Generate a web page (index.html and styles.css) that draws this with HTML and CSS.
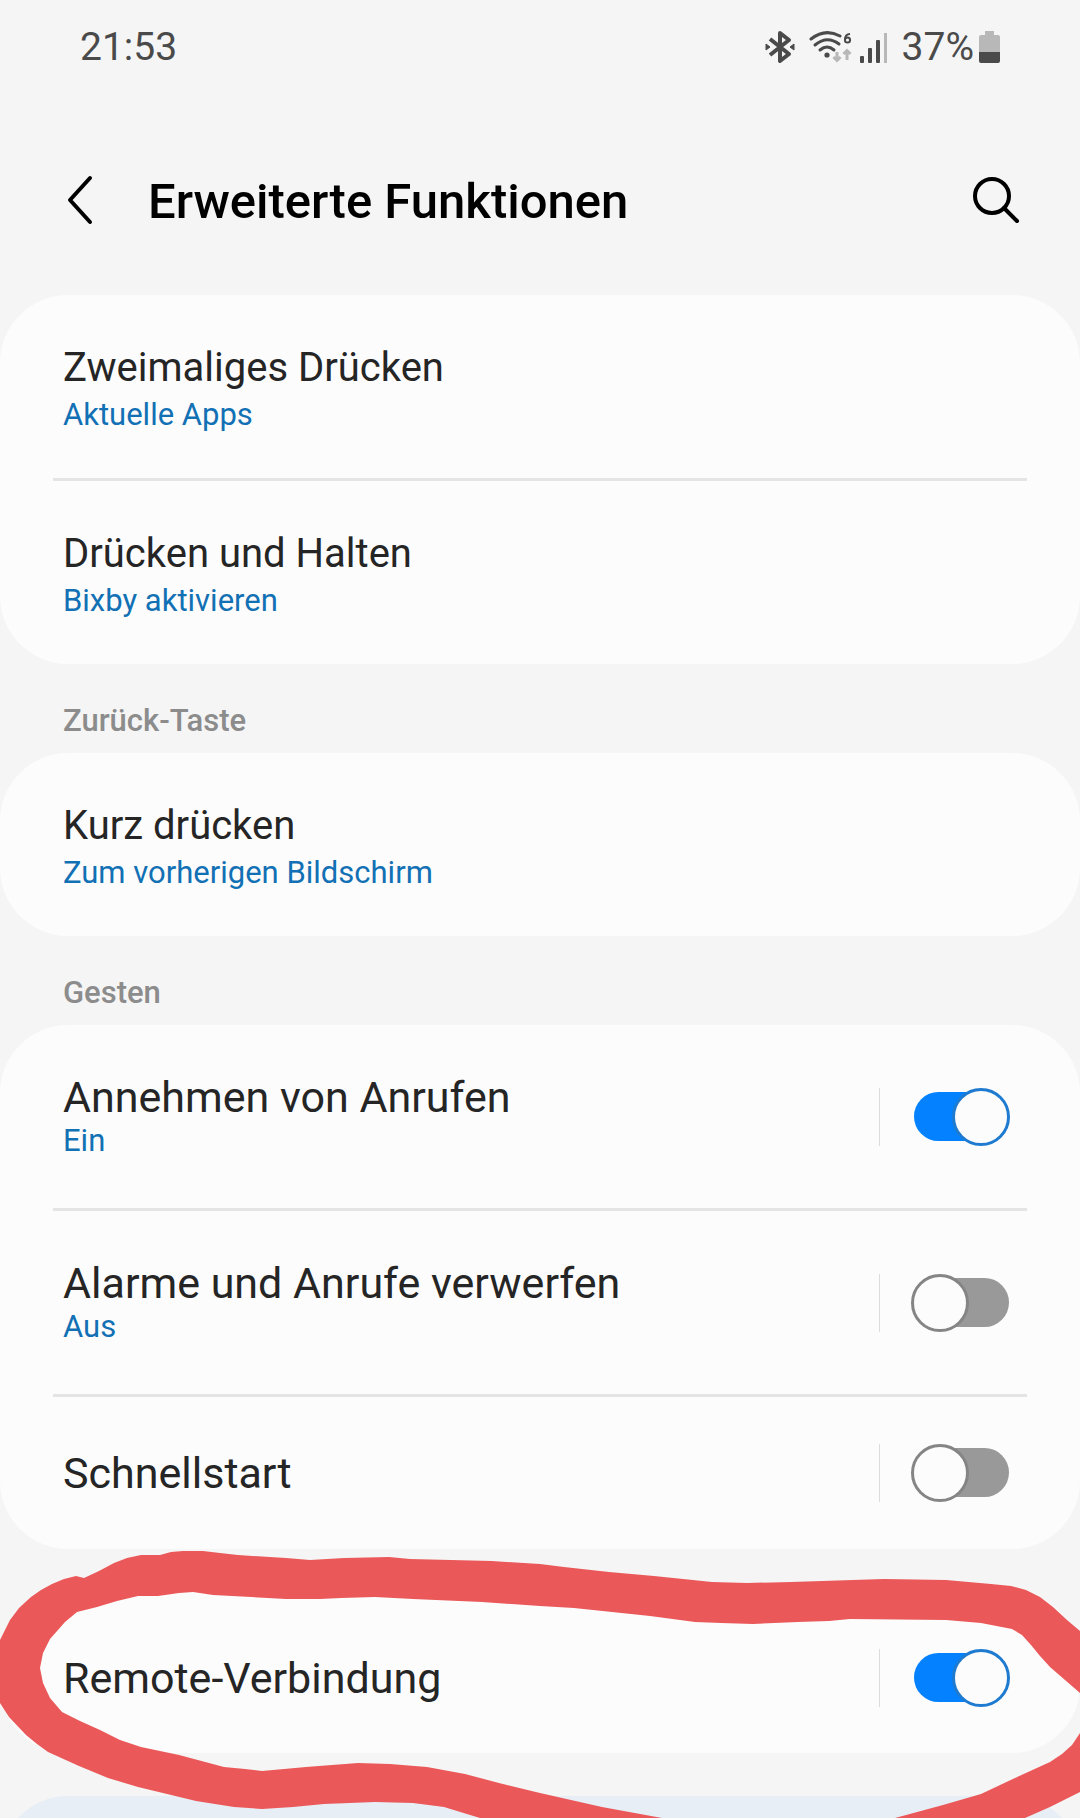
FILE: index.html
```html
<!doctype html>
<html lang="de">
<head>
    <meta charset="UTF-8">
    <meta name="viewport" content="width=device-width, initial-scale=1.0">
    <title>Erweiterte Funktionen</title>
    <link rel="stylesheet" href="styles.css">
</head>
<body>
<div class="page">
    <div class="status">
        <span class="time">21:53</span>
        <div class="status-icons">
            <svg class="ic-bt" viewBox="0 0 30 34" width="30" height="34">
                <path d="M5 9 L24 24 L15 31 V3 L24 10 L5 25" fill="none" stroke="#4a4a4a" stroke-width="4" stroke-linejoin="round"/>
                <path d="M1 14 L5 17 L1 20 Z M29 14 L25 17 L29 20 Z" fill="#4a4a4a" stroke="#4a4a4a"/>
            </svg>
            <svg class="ic-wifi" viewBox="0 0 43 34" width="43" height="34">
                <g fill="none" stroke="#4a4a4a" stroke-width="3" stroke-linecap="round">
                    <path d="M2 9 Q16 -2 31 6"/>
                    <path d="M6 15 Q18 5 30 14"/>
                    <path d="M11 20 Q18 14 25 20"/>
                </g>
                <circle cx="18" cy="25" r="2.6" fill="#4a4a4a"/>
                <path d="M41 4 Q36 4 36 10" fill="none" stroke="#4a4a4a" stroke-width="2"/>
                <circle cx="38.5" cy="10" r="2.6" fill="none" stroke="#4a4a4a" stroke-width="2"/>
                <path d="M28 22 V31 M24.5 27 L28 30.500 L31.5 27 M38 30 V21 M34.5 24 L38 20.5 L41.5 24" fill="none" stroke="#b8b8b8" stroke-width="3"/>
            </svg>
            <svg class="ic-signal" viewBox="0 0 28 34" width="28" height="34">
                <g fill="#4a4a4a">
                    <rect x="0" y="26" width="4" height="7" rx="1"/>
                    <rect x="8" y="18" width="4" height="15" rx="1"/>
                    <rect x="16" y="10" width="4" height="23" rx="1"/>
                </g>
                <rect x="24" y="3" width="3" height="30" fill="#b8b8b8"/>
            </svg>
            <span class="percent">37%</span>
            <svg class="ic-battery" viewBox="0 0 22 34" width="22" height="34">
                <path d="M6 1 H15 V5 H19 Q21 5 21 7 V23 H0 V7 Q0 5 2 5 H6 Z" fill="#b8b8b8"/>
                <path d="M0 22 H21 V31 Q21 33 19 33 H2 Q0 33 0 31 Z" fill="#4a4a4a"/>
            </svg>
        </div>
    </div>

    <header class="header">
        <button class="icon-btn" type="button" aria-label="Zurück">
            <svg viewBox="0 0 28 50" width="28" height="50">
                <path d="M24 3 L4 25 L24 47" fill="none" stroke="#000" stroke-width="4" stroke-linecap="round" stroke-linejoin="round"/>
            </svg>
        </button>
        <h1>Erweiterte Funktionen</h1>
        <button class="icon-btn" type="button" aria-label="Suchen">
            <svg viewBox="0 0 48 48" width="48" height="48">
                <circle cx="20" cy="20" r="17" fill="none" stroke="#000" stroke-width="4"/>
                <path d="M32 32 L45 45" stroke="#000" stroke-width="4" stroke-linecap="round"/>
            </svg>
        </button>
    </header>

    <main class="content">
        <section class="card">
            <a class="row" href="#">
                <span class="title">Zweimaliges Drücken</span>
                <span class="summary">Aktuelle Apps</span>
            </a>
            <a class="row" href="#">
                <span class="title">Drücken und Halten</span>
                <span class="summary">Bixby aktivieren</span>
            </a>
        </section>

        <h2>Zurück-Taste</h2>
        <section class="card">
            <a class="row" href="#">
                <span class="title">Kurz drücken</span>
                <span class="summary">Zum vorherigen Bildschirm</span>
            </a>
        </section>

        <h2>Gesten</h2>
        <section class="card">
            <div class="row row-switch">
                <label for="calls">
                    <span class="title">Annehmen von Anrufen</span>
                    <span class="summary">Ein</span>
                </label>
                <div class="switch-box"><input class="switch" id="calls" type="checkbox" role="switch" checked></div>
            </div>
            <div class="row row-switch">
                <label for="mute">
                    <span class="title">Alarme und Anrufe verwerfen</span>
                    <span class="summary">Aus</span>
                </label>
                <div class="switch-box"><input class="switch" id="mute" type="checkbox" role="switch"></div>
            </div>
            <div class="row row-switch row-single">
                <label for="quick"><span class="title">Schnellstart</span></label>
                <div class="switch-box"><input class="switch" id="quick" type="checkbox" role="switch"></div>
            </div>
        </section>

        <div class="marked">
            <section class="card">
                <div class="row row-switch row-single">
                    <label for="remote"><span class="title">Remote-Verbindung</span></label>
                    <div class="switch-box"><input class="switch" id="remote" type="checkbox" role="switch" checked></div>
                </div>
            </section>
            <section class="tip"></section>
            <!-- red marker line around the remote row -->
            <svg class="marker" viewBox="0 1549 1080 269" preserveAspectRatio="none" aria-hidden="true">
                <path d="M0 1640 L10 1620 L19 1608 L31 1597 L41 1590 L52 1584 L64 1579 L76 1576 L84 1578 L99 1571 L114 1563 L127 1558 L141 1555 L160 1555 L171 1552 L183 1551 L203 1551 L220 1553 L238 1555 L286 1558 L310 1560 L344 1558 L389 1557 L410 1559 L492 1561 L540 1564 L564 1567 L609 1572 L654 1576 L712 1582 L747 1583 L791 1582 L884 1579 L946 1580 L991 1584 L1011 1586 L1026 1590 L1040 1597 L1053 1607 L1067 1620 L1080 1631
                V1693 L1065 1680 L1050 1667 L1040 1656 L1031 1645 L1022 1635 L1012 1629 L981 1623 L946 1620 L850 1619 L829 1621 L798 1622 L753 1624 L721 1623 L695 1622 L650 1616 L574 1608 L540 1606 L482 1602 L413 1599 L375 1597 L341 1598 L320 1599 L286 1599 L213 1595 L193 1592 L179 1593 L158 1596 L138 1596 L117 1601 L97 1607 L77 1612 L65 1622 L50 1639 L43 1653 L40 1668 L43 1683 L50 1698 L62 1712 L80 1721 L100 1730 L120 1740 L141 1747 L179 1755 L224 1767 L245 1769 L262 1771 L306 1767 L358 1763 L390 1764 L427 1767 L465 1774 L499 1783 L540 1793 L602 1807 L662 1818
                H480 L444 1807 L413 1803 L375 1802 L324 1804 L293 1807 L262 1809 L234 1807 L196 1801 L138 1787 L108 1778 L79 1766 L48 1752 L37 1744 L26 1735 L9 1717 L0 1703 Z"/>
                <path d="M895 1818 L943 1805 L981 1794 L1015 1778 L1050 1762 L1062 1754 L1072 1745 L1080 1733 V1792 L1050 1807 L1025 1818 Z"/>
            </svg>
        </div>
    </main>
</div>
</body>
</html>
```
FILE: styles.css
```css
*,
*::before,
*::after{
    box-sizing: border-box;
}
body{
    margin: 0;
    background-color: #f5f5f5;
    font-family: Roboto, "Liberation Sans", sans-serif;
    color: #252525;
}
.page{
    display: flex;
    flex-direction: column;
    min-height: 100vh;
    overflow: hidden;
}
/* status bar */
.status{
    display: flex;
    justify-content: space-between;
    align-items: center;
    height: 94px;
    padding: 0 79px 0 80px;
    color: #4a4a4a;
    font-size: 39px;
}
.status-icons{
    display: flex;
    align-items: center;
}
.ic-wifi{
    margin-left: 14px;
}
.ic-signal{
    margin-left: 8px;
}
.percent{
    margin: 0 5px 0 14px;
}
/* header */
.header{
    display: flex;
    align-items: center;
    height: 201px;
    padding: 10px 60px 0 66px;
}
.header h1{
    flex: 1;
    margin: 0 0 0 54px;
    padding-top: 4px;
    font-size: 49px;
    font-weight: 500;
    line-height: 60px;
    color: #000;
}
.icon-btn{
    display: flex;
    padding: 0;
    border: 0;
    background: none;
    cursor: pointer;
}
.content{
    display: flex;
    flex: 1;
    flex-direction: column;
}
.content h2{
    margin: 0;
    padding: 37px 63px 12px;
    font-size: 31px;
    font-weight: 500;
    line-height: 40px;
    color: #8c8c8c;
}
/* cards */
.card{
    padding: 0 53px;
    border-radius: 68px;
    background-color: #fcfcfc;
}
.row{
    display: block;
    padding: 49px 10px 40px;
    color: inherit;
    text-decoration: none;
}
.row + .row{
    border-top: 3px solid #e4e4e4;
}
.title,
.summary{
    display: block;
}
.title{
    font-size: 40px;
    line-height: 48px;
}
.summary{
    font-size: 31px;
    line-height: 46px;
    color: #1270b4;
}
.row-switch{
    display: flex;
    justify-content: space-between;
    align-items: center;
    padding: 48px 10px 47px;
}
.row-switch label{
    flex: 1;
}
.row-switch .title{
    font-size: 43px;
}
.row-switch .summary{
    line-height: 40px;
}
.row-single{
    padding: 47px 10px;
}
/* switches */
.switch-box{
    padding-left: 31px;
    border-left: 1px solid #dcdcdc;
}
.switch{
    position: relative;
    display: block;
    width: 100px;
    height: 58px;
    margin: 0 6px 0 0;
    appearance: none;
    cursor: pointer;
}
.switch::before{
    content: "";
    position: absolute;
    inset: 4px 2px 5px 3px;
    border-radius: 25px;
    background-color: #999;
}
.switch::after{
    content: "";
    position: absolute;
    top: 0;
    left: 0;
    width: 58px;
    height: 58px;
    border: 3px solid #858585;
    border-radius: 50%;
    background-color: #fcfcfc;
}
.switch:checked::before{
    background-color: #0381fe;
}
.switch:checked::after{
    left: 41px;
    border-color: #1f7bd0;
}
/* marked row */
.marked{
    position: relative;
    display: flex;
    flex: 1;
    flex-direction: column;
    gap: 43px;
    padding-top: 43px;
}
.marked .row{
    padding-top: 57px;
    padding-bottom: 46px;
}
.tip{
    flex: 1;
    min-height: 68px;
    margin-bottom: -46px;
    border-radius: 68px 68px 0 0;
    background-color: #e7eef6;
}
.marker{
    position: absolute;
    inset: 0;
    width: 100%;
    height: 100%;
    fill: #eb5859;
    pointer-events: none;
}
```
